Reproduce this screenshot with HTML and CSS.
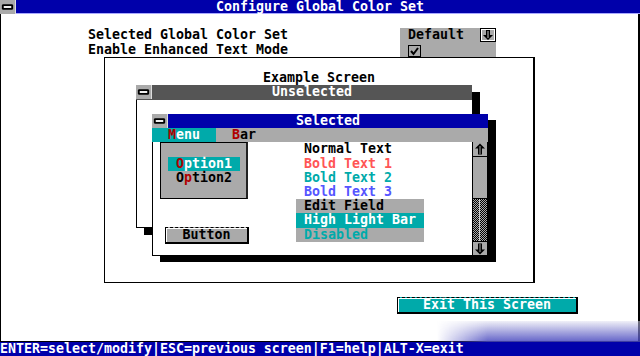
FILE: index.html
```html
<!DOCTYPE html>
<html>
<head>
<meta charset="utf-8">
<link rel="stylesheet" href="styles.css">
</head>
<body>
<div class="screen">
  <div class="titlebar">
    <span class="closebox"><svg width="16" height="14" viewBox="0 0 16 14"><rect x="2" y="4" width="12" height="6" rx="1.5" fill="#000"/><rect x="4" y="6" width="8" height="2" fill="#fff"/></svg></span>
    <span class="title">Configure Global Color Set</span>
  </div>
  <div class="main">
    <div class="settings">
      <div class="labels">
        <div class="row">Selected Global Color Set</div>
        <div class="row">Enable Enhanced Text Mode</div>
      </div>
      <div class="values">
        <div class="row dd"><span>Default</span><svg width="16" height="14" viewBox="0 0 16 14"><rect x="0.5" y="0.5" width="15" height="13" fill="#aaa" stroke="#000"/><rect x="1.5" y="1.5" width="13" height="11" fill="none" stroke="#fff"/><path d="M6 2h4v5h3l-5 5-5-5h3z" fill="#000"/><path d="M8 3v7" stroke="#fff" stroke-width="0.8"/></svg></div>
        <div class="row cb"><svg width="16" height="14" viewBox="0 0 16 14"><rect x="0.5" y="1.5" width="12" height="11" fill="#aaa" stroke="#000"/><path d="M3 7l2.5 3L10 4" fill="none" stroke="#000" stroke-width="2"/></svg></div>
      </div>
    </div>
    <div class="frame">
      <div class="frame-title">Example Screen</div>
      <div class="desk">
        <div class="win unsel">
          <div class="wtitle">
            <span class="closebox"><svg width="16" height="14" viewBox="0 0 16 14"><rect x="2" y="4" width="12" height="6" rx="1.5" fill="#000"/><rect x="4" y="6" width="8" height="2" fill="#fff"/></svg></span>
            <span class="wname">Unselected</span>
          </div>
          <div class="wbody"></div>
        </div>
        <div class="win sel">
          <div class="wtitle">
            <span class="closebox"><svg width="16" height="14" viewBox="0 0 16 14"><rect x="2" y="4" width="12" height="6" rx="1.5" fill="#000"/><rect x="4" y="6" width="8" height="2" fill="#fff"/></svg></span>
            <span class="wname">Selected</span>
          </div>
          <div class="menubar">
            <span class="mi mi-on"><span class="hot">M</span>enu</span>
            <span class="mi"><span class="hot">B</span>ar</span>
          </div>
          <div class="wbody">
            <div class="left">
              <div class="opts">
                <div class="opt on"><span class="hot">O</span>ption1</div>
                <div class="opt">O<span class="hot">p</span>tion2</div>
              </div>
              <div class="btn small">Button</div>
            </div>
            <div class="list">
              <div class="li">Normal Text</div>
              <div class="li c-red">Bold Text 1</div>
              <div class="li c-teal">Bold Text 2</div>
              <div class="li c-blue">Bold Text 3</div>
              <div class="li edit">Edit Field</div>
              <div class="li hl">High Light Bar</div>
              <div class="li dis">Disabled</div>
            </div>
            <div class="spacer"></div>
            <div class="sb">
              <div class="sb-btn"><svg width="14" height="14" viewBox="0 0 14 14"><path d="M7 1.5l5 5H9v6H5v-6H2z" fill="#000"/><path d="M7 4v8" stroke="#ccc" stroke-width="0.8"/></svg></div>
              <div class="sb-thumb"></div>
              <div class="sb-track"></div>
              <div class="sb-btn down"><svg width="14" height="14" viewBox="0 0 14 14"><path d="M7 12.5l5-5H9v-6H5v6H2z" fill="#000"/><path d="M7 2v8" stroke="#ccc" stroke-width="0.8"/></svg></div>
            </div>
          </div>
        </div>
      </div>
    </div>
    <div class="exit-wrap"><div class="btn exit">Exit This Screen</div></div>
  </div>
  <div class="status">ENTER=select/modify|ESC=previous screen|F1=help|ALT-X=exit</div>
  <div class="watermark"></div>
</div>
</body>
</html>
```

FILE: styles.css
```css
* { box-sizing: border-box; margin: 0; padding: 0; }
html, body { margin: 0; }
body {
  width: 640px;
  height: 356px;
  overflow: hidden;
  background: #fff;
  color: #000;
  font-family: "DejaVu Sans Mono", monospace;
  font-weight: bold;
  font-size: 13.29px;
  line-height: 14.24px;
}
.screen { position: relative; display: flex; flex-direction: column; height: 356px; }
.titlebar {
  height: 14.24px;
  background: #0000aa;
  color: #fff;
  display: flex;
  box-shadow: inset 0 -1px 0 #a8a8ff;
}
.closebox {
  width: 16px;
  height: 14px;
  flex: none;
  background: #aaa;
  display: flex;
  align-items: center;
  justify-content: center;
  border-right: 1px solid #ddd;
}
.title { flex: 1; text-align: center; padding-right: 16px; }
.main {
  flex: 1;
  border-left: 1px solid #000;
  border-right: 2px solid #000;
  border-bottom: 1px solid #000;
}
.settings { display: flex; padding-top: 14.24px; margin-left: 87px; }
.labels { width: 312px; }
.values { width: 96px; background: #aaa; }
.row { height: 14.24px; white-space: pre; }
.dd { display: flex; justify-content: space-between; padding-left: 8px; }
.cb { padding-left: 8px; padding-top: 1px; }
.frame {
  margin-left: 103px;
  width: 431px;
  height: 226px;
  border: 1px solid #000;
  border-right-width: 2px;
}
.frame-title { padding-top: 13.2px; height: 27.44px; text-align: center; }
.desk { position: relative; }
.win { position: absolute; width: 336px; box-shadow: 8px 7px 0 #000; }
.unsel { left: 31px; top: 0; }
.sel { left: 47px; top: 28.48px; box-shadow: 8px 6px 0 #000; }
.wtitle { height: 14.24px; display: flex; color: #fff; }
.unsel .wtitle { background: #555; }
.sel .wtitle { background: #0000aa; }
.wname { flex: 1; text-align: center; }
.wbody { background: #fff; border-left: 1px solid #000; border-bottom: 1px solid #000; }
.unsel .wbody { height: 128.32px; }
.sel .wbody { height: 113.92px; display: flex; }
.menubar { display: flex; height: 14.24px; background: #aaa; }
.mi { padding-left: 16px; }
.mi-on { width: 64px; background: #00aaaa; color: #fff; }
.hot { color: #b00000; }
.left { width: 143px; padding-left: 7px; }
.opts {
  width: 88px;
  height: 56.96px;
  background: #aaa;
  border: 1px solid #000;
  border-right: 2px solid #222;
  padding-top: 13.24px;
}
.opt { margin-left: 7px; width: 72px; height: 14.24px; padding-left: 8px; }
.opt.on { background: #00aaaa; color: #fff; }
.btn {
  text-align: center;
  border-top: 1px dashed #000;
  border-left: 1px solid #000;
  border-right: 2px solid #000;
  border-bottom: 2px solid #000;
  box-shadow: inset 1px 1px 0 #fff;
  line-height: 14px;
}
.small { margin-left: 5px; margin-top: 28px; width: 84px; height: 17px; background: #aaa; }
.list { width: 128px; }
.li { height: 14.24px; padding-left: 8px; white-space: pre; }
.c-red { color: #ff5555; }
.c-teal { color: #00aaaa; }
.c-blue { color: #5555ff; }
.edit { background: #aaa; }
.hl { background: #00aaaa; color: #fff; }
.dis { background: #aaa; color: #00aaaa; }
.spacer { flex: 1; }
.sb {
  width: 16px;
  display: flex;
  flex-direction: column;
  border-left: 1px solid #000;
  border-right: 1px solid #000;
}
.sb-btn {
  height: 14.24px;
  background: #aaa;
  border-bottom: 1px solid #000;
  display: flex;
  align-items: center;
  justify-content: center;
}
.sb-btn.down { border-bottom: none; border-top: 1px solid #000; }
.sb-thumb { height: 42.72px; background: #aaa; border-bottom: 1px solid #000; }
.sb-track {
  flex: 1;
  background:
    linear-gradient(to right, transparent 6px, #ccc 6px, #ccc 7px, transparent 7px),
    repeating-conic-gradient(#000 0 25%, #aaa 0 50%) 0 0 / 2px 2px;
}
.exit-wrap { margin-top: 14px; margin-left: 396px; }
.exit { width: 181px; height: 17px; background: #00aaaa; color: #fff; }
.status {
  height: 14.24px;
  background: #0000aa;
  color: #fff;
  white-space: pre;
}
.watermark {
  position: absolute;
  left: 437px;
  top: 321px;
  width: 203px;
  height: 21px;
  background: linear-gradient(to bottom, rgba(225,225,240,0.5), rgba(70,70,190,0.85));
  -webkit-mask-image: linear-gradient(to right, transparent, #000 25%);
  mask-image: linear-gradient(to right, transparent, #000 25%);
}
```
